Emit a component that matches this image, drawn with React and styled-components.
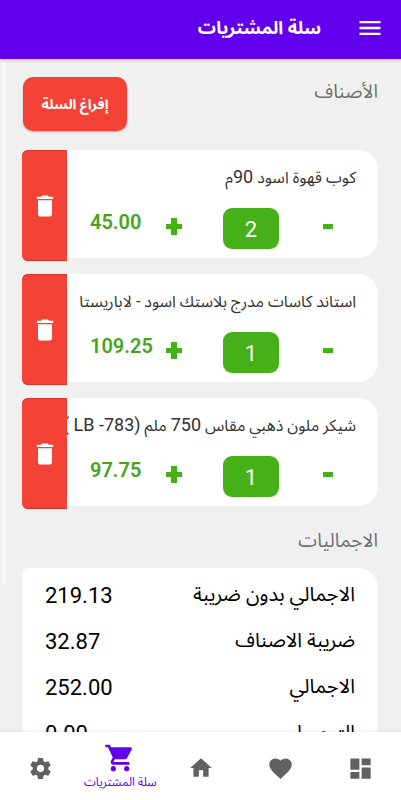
import React, { useState } from "react";
import styled, { createGlobalStyle } from "styled-components";
import {
  MdMenu,
  MdDelete,
  MdShoppingCart,
  MdHome,
  MdFavorite,
  MdDashboard,
} from "react-icons/md";

const GlobalStyle = createGlobalStyle`
  * { box-sizing: border-box; }
  body {
    margin: 0;
    background: #f0f0f0;
    font-family: Roboto, "Noto Sans Arabic", "DejaVu Sans", sans-serif;
  }
  button { font-family: inherit; border: 0; padding: 0; cursor: pointer; }
  h1, h2, h3, p, dl, dt, dd, ul { margin: 0; padding: 0; font-weight: 400; }
`;

const Screen = styled.div`
  display: flex;
  flex-direction: column;
  height: 100vh;
  overflow: hidden;
`;

const AppBar = styled.header`
  display: flex;
  align-items: center;
  gap: 35px;
  flex: none;
  height: 59px;
  padding: 0 17px 4px;
  background: #6200ee;
  color: #fff;
  box-shadow: 0 1px 4px rgba(0, 0, 0, 0.2);
  z-index: 1;
`;

const MenuButton = styled.button`
  display: flex;
  background: none;
  color: inherit;
`;

const Title = styled.h1`
  font-size: 18px;
  line-height: 28px;
  font-weight: 700;
`;

const ScrollArea = styled.div`
  position: relative;
  display: flex;
  flex: 1;
  min-height: 0;
`;

const Content = styled.main`
  flex: 1;
  min-width: 0;
  overflow-y: auto;
  scrollbar-width: none;
  padding: 18px 23px 0 22px;
`;

const ScrollThumb = styled.div`
  position: absolute;
  top: 3px;
  left: 2px;
  width: 4px;
  height: 522px;
  background: #f8f8f8;
`;

const SectionHead = styled.div`
  display: flex;
  justify-content: space-between;
  align-items: flex-start;
  margin-bottom: 19px;
  padding-left: 1px;
`;

const SectionTitle = styled.h2`
  font-size: 19px;
  line-height: 30px;
  color: #707070;
`;

const ClearButton = styled.button`
  width: 104px;
  height: 54px;
  border-radius: 10px;
  background: #f44336;
  color: #fff;
  font-size: 14px;
  font-weight: 700;
  box-shadow: 0 1px 2px rgba(0, 0, 0, 0.25);
`;

const ItemList = styled.ul`
  display: grid;
  grid-template-columns: minmax(0, 1fr);
  gap: 16px;
  margin-bottom: 20px;
  list-style: none;
`;

const Item = styled.li`
  display: flex;
  height: 108px;
  border-radius: 6px 20px 20px 6px;
  background: #fff;
`;

const ItemBody = styled.div`
  flex: 1;
  min-width: 0;
  padding-top: 14px;
  overflow: hidden;
`;

const ItemName = styled.h3`
  height: 28px;
  padding-right: 22px;
  font-size: 16px;
  line-height: 28px;
  color: #333;
  white-space: nowrap;
`;

const Latin = styled.span`
  font-size: 18px;
  line-height: 20px;
`;

const Controls = styled.div`
  display: grid;
  grid-template-columns: 40px 56px 40px 1fr;
  column-gap: 29px;
  align-items: start;
  padding: 16px 30px 0 0;
`;

const StepButton = styled.button`
  display: flex;
  align-items: center;
  justify-content: center;
  height: 36px;
  background: none;
  color: #46b018;
`;

const Quantity = styled.output`
  height: 41px;
  border-radius: 9px;
  background: #46b018;
  color: #fff;
  font-size: 22px;
  line-height: 44px;
  text-align: center;
`;

const Price = styled.p`
  direction: ltr;
  width: 64px;
  margin-right: -29px;
  font-size: 20px;
  line-height: 28px;
  font-weight: 600;
  color: #46a51b;
`;

const DeleteButton = styled.button`
  display: flex;
  align-items: center;
  justify-content: center;
  flex: none;
  width: 45px;
  height: 111px;
  border-radius: 6px 0 0 6px;
  background: #f44336;
  color: #fff;
  box-shadow: inset 0 1px #d9362b, inset 0 -1px #d9362b;
`;

const Totals = styled.dl`
  margin-top: 12px;
  padding: 4px 23px 12px;
  border-radius: 6px 20px 6px 6px;
  background: #fff;
`;

const TotalRow = styled.div`
  display: flex;
  align-items: center;
  justify-content: space-between;
  height: 46px;
  font-size: 22px;
  color: #000;
`;

const TotalLabel = styled.dt`
  font-size: 20px;
`;

const TotalValue = styled.dd`
  direction: ltr;
`;

const BottomNav = styled.nav`
  display: grid;
  grid-template-columns: repeat(5, 1fr);
  flex: none;
  height: 68px;
  background: #fff;
  box-shadow: 0 0 4px rgba(0, 0, 0, 0.12);
  z-index: 1;
`;

const NavLink = styled.a`
  display: flex;
  flex-direction: column;
  align-items: center;
  justify-content: center;
  padding-top: ${(p) => (p.$active ? "0" : "4px")};
  color: ${(p) => (p.$active ? "#6200ee" : "#616161")};
  font-size: 12px;
  line-height: 16px;
  text-decoration: none;
  white-space: nowrap;
`;

function GearIcon({ size }) {
  return (
    <svg width={size} height={size} viewBox="0 0 24 24" fill="currentColor">
      <path d="M19.43 12.98c.04-.32.07-.64.07-.98s-.03-.66-.07-.98l2.11-1.65c.19-.15.24-.42.12-.64l-2-3.46c-.12-.22-.39-.3-.61-.22l-2.49 1c-.52-.4-1.08-.73-1.69-.98l-.38-2.65C14.46 2.18 14.25 2 14 2h-4c-.25 0-.46.18-.49.42l-.38 2.65c-.61.25-1.17.59-1.69.98l-2.49-1c-.23-.09-.49 0-.61.22l-2 3.46c-.13.22-.07.49.12.64l2.11 1.65c-.04.32-.07.65-.07.98s.03.66.07.98l-2.11 1.65c-.19.15-.24.42-.12.64l2 3.46c.12.22.39.3.61.22l2.49-1c.52.4 1.08.73 1.69.98l.38 2.65c.03.24.24.42.49.42h4c.25 0 .46-.18.49-.42l.38-2.65c.61-.25 1.17-.59 1.69-.98l2.49 1c.23.09.49 0 .61-.22l2-3.46c.12-.22.07-.49-.12-.64l-2.11-1.65zM12 15.5c-1.93 0-3.5-1.57-3.5-3.5s1.57-3.5 3.5-3.5 3.5 1.57 3.5 3.5-1.57 3.5-3.5 3.5z" />
    </svg>
  );
}

const products = [
  { id: 1, name: "كوب قهوة اسود 90م", qty: 2, price: 45 },
  { id: 2, name: "استاند كاسات مدرج بلاستك اسود - لاباريستا", qty: 1, price: 109.25 },
  { id: 3, name: "شيكر ملون ذهبي مقاس 750 ملم (LB -783 )", qty: 1, price: 97.75 },
];

const totals = [
  ["الاجمالي بدون ضريبة", "219.13"],
  ["ضريبة الاصناف", "32.87"],
  ["الاجمالي", "252.00"],
  ["التوصيل", "0.00"],
];

const links = [
  { id: "dashboard", label: "الأقسام", Icon: MdDashboard, size: 27 },
  { id: "favorites", label: "المفضلة", Icon: MdFavorite, size: 27 },
  { id: "home", label: "الرئيسية", Icon: MdHome, size: 26 },
  { id: "cart", label: "سلة المشتريات", Icon: MdShoppingCart, size: 32, active: true },
  { id: "settings", label: "الإعدادات", Icon: GearIcon, size: 25 },
];

/* Latin letters, digits and their brackets are set larger than the Arabic text. */
function MixedText({ text }) {
  return text
    .split(/(\([^)]*\)|[0-9]+)/)
    .map((part, i) => (i % 2 ? <Latin key={i}>{part}</Latin> : part));
}

function CartItem({ product }) {
  const [qty, setQty] = useState(product.qty);
  return (
    <Item>
      <ItemBody>
        <ItemName>
          <MixedText text={product.name} />
        </ItemName>
        <Controls>
          <StepButton aria-label="إنقاص" onClick={() => setQty(Math.max(1, qty - 1))}>
            <svg width="10" height="5" viewBox="0 0 10 5">
              <path d="M0 0h10v5H0z" fill="currentColor" />
            </svg>
          </StepButton>
          <Quantity>{qty}</Quantity>
          <StepButton aria-label="زيادة" onClick={() => setQty(qty + 1)}>
            <svg width="16" height="17" viewBox="0 0 16 17">
              <path d="M5 0h6v6h5v5h-5v6H5v-6H0V6h5z" fill="currentColor" />
            </svg>
          </StepButton>
          <Price>{((product.price * qty) / product.qty).toFixed(2)}</Price>
        </Controls>
      </ItemBody>
      <DeleteButton aria-label="حذف">
        <MdDelete size={28} />
      </DeleteButton>
    </Item>
  );
}

export default function App() {
  return (
    <Screen dir="rtl" lang="ar">
      <GlobalStyle />
      <AppBar>
        <MenuButton aria-label="القائمة">
          <MdMenu size={28} />
        </MenuButton>
        <Title>سلة المشتريات</Title>
      </AppBar>
      <ScrollArea>
        <Content>
          <SectionHead>
            <SectionTitle>الأصناف</SectionTitle>
            <ClearButton>إفراغ السلة</ClearButton>
          </SectionHead>
          <ItemList>
            {products.map((product) => (
              <CartItem key={product.id} product={product} />
            ))}
          </ItemList>
          <SectionTitle>الاجماليات</SectionTitle>
          <Totals>
            {totals.map(([label, value]) => (
              <TotalRow key={label}>
                <TotalLabel>{label}</TotalLabel>
                <TotalValue>{value}</TotalValue>
              </TotalRow>
            ))}
          </Totals>
        </Content>
        <ScrollThumb />
      </ScrollArea>
      <BottomNav>
        {links.map(({ id, label, Icon, size, active }) => (
          <NavLink key={id} href={`#${id}`} $active={active} aria-label={label}>
            <Icon size={size} />
            {active && label}
          </NavLink>
        ))}
      </BottomNav>
    </Screen>
  );
}
